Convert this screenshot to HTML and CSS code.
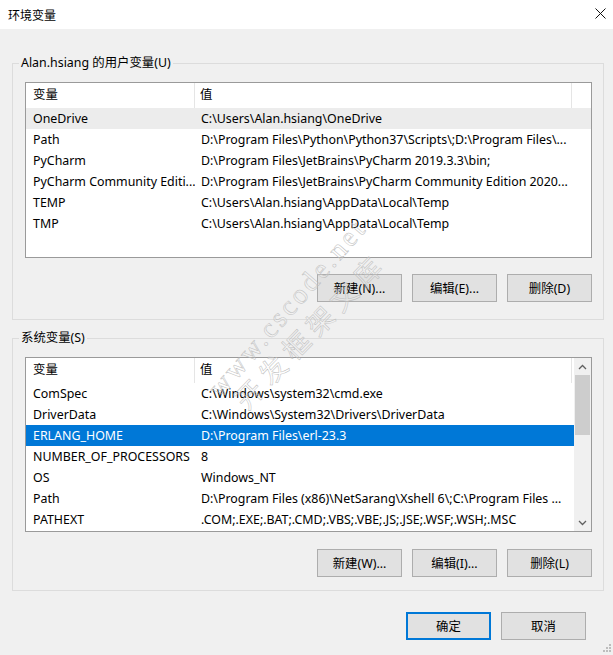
FILE: index.html
```html
<!DOCTYPE html>
<html lang="zh-CN">

<head>
    <meta charset="UTF-8" />
    <title>环境变量</title>
    <link rel="stylesheet" href="styles.css">
</head>

<body>
    <div class="titlebar">
        <span class="title">环境变量</span>
        <svg class="close" width="11" height="11" viewBox="0 0 11 11">
            <path d="M0.5 0.5 L10.5 10.5 M10.5 0.5 L0.5 10.5" stroke="#111" stroke-width="1" fill="none" />
        </svg>
    </div>

    <div class="content">
        <fieldset class="group group-user">
            <legend>Alan.hsiang 的用户变量(U)</legend>
            <div class="listview lv-user">
                <div class="lv-main">
                    <div class="lv-head">
                        <div class="cell">变量</div>
                        <div class="cell">值</div>
                    </div>
                    <div class="lv-row hover"><div class="cell">OneDrive</div><div class="cell">C:\Users\Alan.hsiang\OneDrive</div></div>
                    <div class="lv-row"><div class="cell">Path</div><div class="cell">D:\Program Files\Python\Python37\Scripts\;D:\Program Files\...</div></div>
                    <div class="lv-row"><div class="cell">PyCharm</div><div class="cell">D:\Program Files\JetBrains\PyCharm 2019.3.3\bin;</div></div>
                    <div class="lv-row"><div class="cell">PyCharm Community Editi...</div><div class="cell">D:\Program Files\JetBrains\PyCharm Community Edition 2020...</div></div>
                    <div class="lv-row"><div class="cell">TEMP</div><div class="cell">C:\Users\Alan.hsiang\AppData\Local\Temp</div></div>
                    <div class="lv-row"><div class="cell">TMP</div><div class="cell">C:\Users\Alan.hsiang\AppData\Local\Temp</div></div>
                </div>
            </div>
            <div class="btn-row">
                <button class="btn">新建(N)...</button>
                <button class="btn">编辑(E)...</button>
                <button class="btn">删除(D)</button>
            </div>
        </fieldset>

        <fieldset class="group group-sys">
            <legend>系统变量(S)</legend>
            <div class="listview lv-sys">
                <div class="lv-main">
                    <div class="lv-head">
                        <div class="cell">变量</div>
                        <div class="cell">值</div>
                    </div>
                    <div class="lv-row"><div class="cell">ComSpec</div><div class="cell">C:\Windows\system32\cmd.exe</div></div>
                    <div class="lv-row"><div class="cell">DriverData</div><div class="cell">C:\Windows\System32\Drivers\DriverData</div></div>
                    <div class="lv-row selected"><div class="cell">ERLANG_HOME</div><div class="cell">D:\Program Files\erl-23.3</div></div>
                    <div class="lv-row"><div class="cell">NUMBER_OF_PROCESSORS</div><div class="cell">8</div></div>
                    <div class="lv-row"><div class="cell">OS</div><div class="cell">Windows_NT</div></div>
                    <div class="lv-row"><div class="cell">Path</div><div class="cell">D:\Program Files (x86)\NetSarang\Xshell 6\;C:\Program Files ...</div></div>
                    <div class="lv-row"><div class="cell">PATHEXT</div><div class="cell">.COM;.EXE;.BAT;.CMD;.VBS;.VBE;.JS;.JSE;.WSF;.WSH;.MSC</div></div>
                </div>
                <div class="scrollbar">
                    <div class="sb-arrow">
                        <svg width="9" height="6" viewBox="0 0 9 6"><path d="M1 5 L4.5 1.5 L8 5" stroke="#606060" stroke-width="1.3" fill="none" /></svg>
                    </div>
                    <div class="sb-track"><div class="sb-thumb"></div></div>
                    <div class="sb-arrow">
                        <svg width="9" height="6" viewBox="0 0 9 6"><path d="M1 1 L4.5 4.5 L8 1" stroke="#606060" stroke-width="1.3" fill="none" /></svg>
                    </div>
                </div>
            </div>
            <div class="btn-row">
                <button class="btn">新建(W)...</button>
                <button class="btn">编辑(I)...</button>
                <button class="btn">删除(L)</button>
            </div>
        </fieldset>

        <div class="dialog-buttons">
            <button class="btn btn-default">确定</button>
            <button class="btn">取消</button>
        </div>
    </div>

    <!-- watermark from the source image -->
    <div class="watermark wm-1">www.cscode.net</div>
    <div class="watermark wm-2">开发框架文库</div>

    <svg class="grip" width="8" height="8" viewBox="0 0 8 8">
        <rect x="6" y="0" width="2" height="2" fill="#bdbdbd" />
        <rect x="3" y="3" width="2" height="2" fill="#bdbdbd" />
        <rect x="6" y="3" width="2" height="2" fill="#bdbdbd" />
        <rect x="0" y="6" width="2" height="2" fill="#bdbdbd" />
        <rect x="3" y="6" width="2" height="2" fill="#bdbdbd" />
        <rect x="6" y="6" width="2" height="2" fill="#bdbdbd" />
    </svg>
</body>

</html>
```

FILE: styles.css
```css
html,
body {
    margin: 0;
    padding: 0;
}

body {
    position: relative;
    width: 613px;
    height: 655px;
    overflow: hidden;
    background: #f0f0f0;
    font-family: "Noto Sans", "Noto Sans CJK SC", sans-serif;
    font-size: 12.4px;
    color: #000;
}

.titlebar {
    height: 29px;
    background: #fff;
    display: flex;
    align-items: center;
    justify-content: space-between;
    padding: 0 7px 0 8px;
}

.title {
    font-size: 12px;
}

.close {
    margin-top: -2px;
}

.content {
    padding: 26px 9px 0 12px;
}

.group {
    margin: 0;
    border: 1px solid #dcdcdc;
    padding: 11px 11px 17px 12px;
}

.group legend {
    padding: 0 2px;
    margin-left: -6px;
    line-height: 16px;
}

.group-sys {
    margin-top: 10px;
    padding-bottom: 13px;
}

.listview {
    box-sizing: border-box;
    height: 176px;
    border: 1px solid #9a9a9a;
    background: #fff;
    display: flex;
    overflow: hidden;
}

.lv-sys {
    height: 175px;
}

.lv-main {
    flex: 1;
}

.lv-head,
.lv-row {
    display: grid;
    grid-template-columns: 169px 377px;
}

.lv-head {
    height: 25px;
    line-height: 24px;
}

.lv-head .cell {
    border-right: 1px solid #e5e5e5;
    padding-left: 7px;
}

.lv-head .cell + .cell {
    padding-left: 5px;
}

.lv-row {
    height: 21px;
    line-height: 21px;
}

.cell {
    white-space: nowrap;
    overflow: hidden;
    padding-left: 7px;
}

.lv-row .cell + .cell {
    padding-left: 6px;
}

.lv-row.hover {
    background: #ececec;
}

.lv-row.selected {
    background: #0078d7;
    color: #fff;
}

.scrollbar {
    width: 17px;
    background: #f0f0f0;
    display: flex;
    flex-direction: column;
}

.sb-arrow {
    height: 17px;
    display: flex;
    align-items: center;
    justify-content: center;
}

.sb-track {
    flex: 1;
}

.sb-thumb {
    height: 60px;
    margin: 0 1px;
    background: #cdcdcd;
}

.btn-row {
    display: flex;
    justify-content: flex-end;
    gap: 10px;
    margin-top: 16px;
}

.group-sys .btn-row {
    margin-top: 17px;
}

.btn {
    box-sizing: border-box;
    width: 85px;
    height: 28px;
    padding: 0;
    border: 1px solid #adadad;
    background: #e1e1e1;
    font: inherit;
    color: #000;
}

.btn-default {
    border: 2px solid #0078d7;
}

.dialog-buttons {
    display: flex;
    justify-content: flex-end;
    gap: 10px;
    margin-top: 21px;
    padding-right: 18px;
}

.watermark {
    position: absolute;
    transform-origin: 0 100%;
    color: rgba(255, 255, 255, 0.15);
    -webkit-text-stroke: 0.5px #bdbdbd;
    white-space: nowrap;
    pointer-events: none;
}

.wm-1 {
    left: 224px;
    top: 374px;
    font-family: "Liberation Serif", serif;
    font-size: 28px;
    line-height: 28px;
    letter-spacing: 3px;
    transform: rotate(-49deg);
}

.wm-2 {
    left: 250px;
    top: 386px;
    font-size: 27px;
    line-height: 28px;
    letter-spacing: 7px;
    transform: rotate(-46deg);
}

.grip {
    position: absolute;
    right: 2px;
    bottom: 3px;
}
```
